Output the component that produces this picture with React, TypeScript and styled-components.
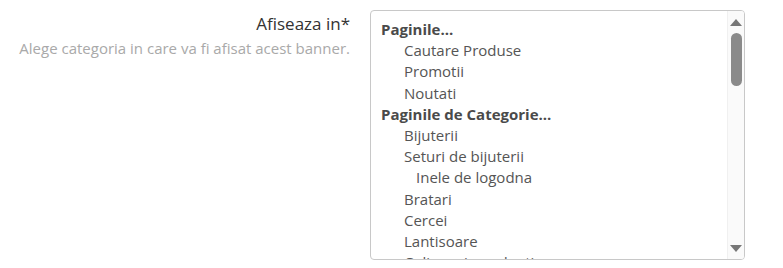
import {FC} from 'react';
import styled, {createGlobalStyle} from 'styled-components';

const GlobalStyle = createGlobalStyle`
    html, body {
        margin: 0;
        padding: 0;
        background: #ffffff;
    }
    body {
        font-family: "Open Sans", "Noto Sans", sans-serif;
    }
`;

// rand cu eticheta + lista
const FormRow = styled.div`
    display: flex;
    align-items: flex-start;
    padding-top: 10px;
    gap: 20px;
`;

const LabelCol = styled.div`
    width: 350px;
    text-align: right;
    display: flex;
    flex-direction: column;
`;

const Label = styled.div`
    font-size: 17px;
    line-height: 22px;
    color: #333333;
    margin-top: 3px;
`;

const Hint = styled.div`
    font-size: 15px;
    line-height: 20px;
    color: #a9a9a9;
    margin-top: 3px;
`;

const ListBox = styled.div`
    width: 373px;
    height: 248px;
    border: 1px solid #c8c8c8;
    border-radius: 4px;
    display: flex;
    overflow: hidden;
    background: #ffffff;
`;

const Options = styled.div`
    flex: 1;
    padding: 8px 10px 0 10px;
    overflow: hidden;
`;

const Option = styled.div<{$level: number; $group?: boolean}>`
    font-size: 15px;
    line-height: 21.2px;
    height: 21.2px;
    white-space: nowrap;
    color: ${p => (p.$group ? '#4a4a4a' : '#555555')};
    font-weight: ${p => (p.$group ? 700 : 400)};
    padding-left: ${p => p.$level * 23 - (p.$level > 1 ? 11 : 0)}px;
`;

// scrollbar
const Scrollbar = styled.div`
    width: 16px;
    background: #fafafa;
    border-left: 1px solid #f0f0f0;
    display: flex;
    flex-direction: column;
    align-items: center;
`;

const Arrow = styled.div<{$down?: boolean}>`
    width: 0;
    height: 0;
    border-left: 6px solid transparent;
    border-right: 6px solid transparent;
    ${p => (p.$down
        ? 'border-top: 7px solid #777777; margin-top: auto; margin-bottom: 7px;'
        : 'border-bottom: 7px solid #777777; margin-top: 8px;')}
`;

const Thumb = styled.div`
    width: 11px;
    height: 53px;
    border-radius: 6px;
    background: #8a8a8a;
    margin-top: 7px;
`;

const items: {text: string; level: number; group?: boolean}[] = [
    {text: 'Paginile...', level: 0, group: true},
    {text: 'Cautare Produse', level: 1},
    {text: 'Promotii', level: 1},
    {text: 'Noutati', level: 1},
    {text: 'Paginile de Categorie...', level: 0, group: true},
    {text: 'Bijuterii', level: 1},
    {text: 'Seturi de bijuterii', level: 1},
    {text: 'Inele de logodna', level: 2},
    {text: 'Bratari', level: 1},
    {text: 'Cercei', level: 1},
    {text: 'Lantisoare', level: 1},
    {text: 'Coliere si pandantive', level: 1},
    {text: 'Inele', level: 1},
];

const App: FC = () => {
    return (
        <>
            <GlobalStyle />
            <FormRow>
                <LabelCol>
                    <Label>Afiseaza in*</Label>
                    <Hint>Alege categoria in care va fi afisat acest banner.</Hint>
                </LabelCol>
                <ListBox role="listbox" aria-multiselectable="true">
                    <Options>
                        {items.map(it => (
                            <Option key={it.text} $level={it.level} $group={it.group} role="option">
                                {it.text}
                            </Option>
                        ))}
                    </Options>
                    <Scrollbar>
                        <Arrow />
                        <Thumb />
                        <Arrow $down />
                    </Scrollbar>
                </ListBox>
            </FormRow>
        </>
    );
};
export default App;
